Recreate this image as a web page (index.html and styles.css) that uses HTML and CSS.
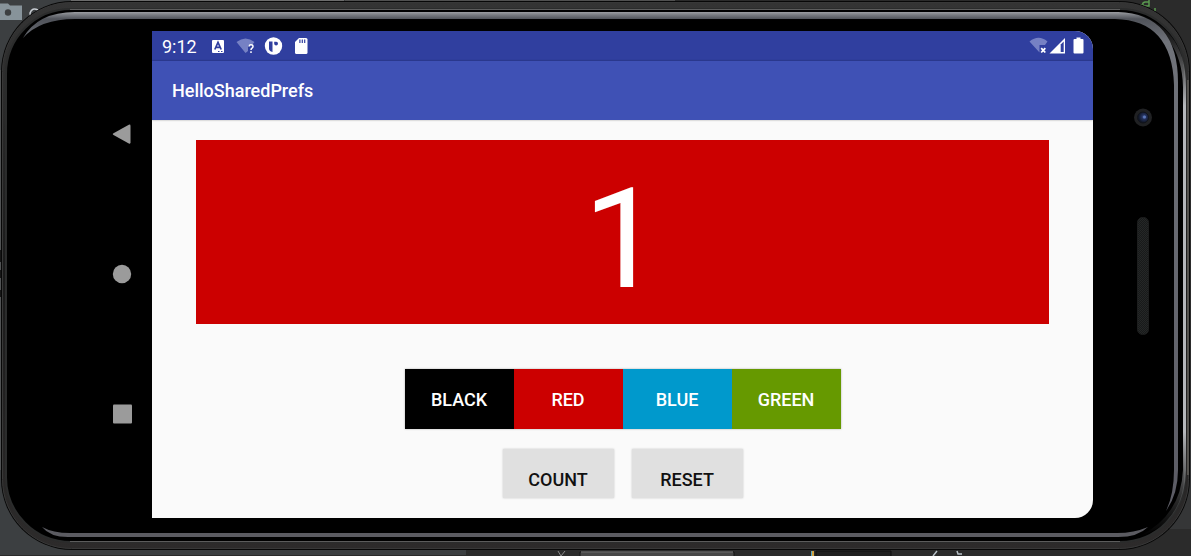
FILE: index.html
```html
<!DOCTYPE html>
<html lang="en">
<head>
<meta charset="utf-8">
<meta name="viewport" content="width=device-width, initial-scale=1">
<title>HelloSharedPrefs</title>
<link rel="stylesheet" href="styles.css">
</head>
<body>
<div class="stage">
  <svg class="frame" viewBox="0 0 1191 556" preserveAspectRatio="none" aria-hidden="true">
    <defs>
      <linearGradient id="rim" x1="0" x2="0" y1="0" y2="1">
        <stop offset="0" stop-color="#343434"/><stop offset=".5" stop-color="#1b1b1b"/><stop offset="1" stop-color="#2d2b2b"/>
      </linearGradient>
      <linearGradient id="shine" gradientUnits="userSpaceOnUse" x1="0" x2="0" y1="12" y2="511">
        <stop offset="0" stop-color="#9c9ea2"/><stop offset=".006" stop-color="#777a80"/><stop offset=".014" stop-color="#50535a"/><stop offset=".06" stop-color="#70737a"/><stop offset="1" stop-color="#5b5b64"/>
      </linearGradient>
      <linearGradient id="edge" x1="0" x2="0" y1="0" y2="1">
        <stop offset="0" stop-color="#555" stop-opacity="0"/><stop offset=".18" stop-color="#b5b7bb"/><stop offset=".8" stop-color="#b5b7bb"/><stop offset="1" stop-color="#555" stop-opacity="0"/>
      </linearGradient>
      <radialGradient id="lens" cx=".6" cy=".45"><stop offset="0" stop-color="#52669b"/><stop offset=".4" stop-color="#24315c"/><stop offset="1" stop-color="#101625"/></radialGradient>
      <pattern id="mesh" width="2" height="2" patternUnits="userSpaceOnUse"><path d="M0 0h2v2H0z" fill="#181a1a"/><path d="M0 0h1v1H0zM1 1h1v1H1z" fill="#252727"/></pattern>
    </defs>
    <path d="M0 0h345v4H0zM0 4h130v552H0z" fill="#3c3f41"/>
    <path d="M71 0h273v2H71z" fill="#6c6c6c"/>
    <path d="M345 0h330v2H345z" fill="#505050"/>
    <path d="M0 548h466v8H0z" fill="#3c3f41"/>
    <path d="M0 555h466v1H0z" fill="#2b2b2b"/>
    <path d="M1187 440h4v89h-51v-20z" fill="#353637"/>
    <path d="M0 3.500h8l2 2h12v14.500H0z" fill="#87939a"/><circle cx="8" cy="12.500" r="3.200" fill="#3c3f41"/>
    <path d="M38 10q-6-3-8 3 0 4 2 6" fill="none" stroke="#c7ccd1" stroke-width="1.500"/>
    <path d="M1136 5h6M1149 0v6h-5q-3-3 1-4h4M1155 8v3" fill="none" stroke="#5b9c50" stroke-width="1.500"/>
    <path d="M0 70h3v400H0z" fill="#515354"/>
    <path d="M0 250h1v12H0zM0 270h1v8H0zM0 290h1v7H0z" fill="#171717"/>
    <rect x="1" y="1" width="1189" height="549" rx="71" fill="#080808"/>
    <rect x="2.500" y="2.500" width="1186" height="546" rx="69" fill="url(#rim)" stroke="#383838"/>
    <rect x="6" y="9" width="1179" height="533" rx="65" fill="#000" stroke="#2b2c2c" stroke-width="2"/>
    <path d="M70 9.500H1120M70 541.500H1120" stroke="#5c5c5c" fill="none"/>
    <path d="M23 38Q38 12 75 12H1118Q1179 14 1178 85V470Q1178 494 1166 511 1174 494 1174 470V85Q1172 20 1115 19H75Q40 19 23 38Z" fill="url(#shine)"/>
    <path d="M42 527Q53 533 70 533H1117Q1134 533 1148 527 1138 537 1118 537H68Q50 537 42 527Z" fill="#5b5b61"/>
    <path d="M1126 11Q1186 23 1186 87V470Q1185 523 1138 537 1181 516 1183 470V87Q1182 30 1126 11Z" fill="url(#edge)"/>
    <path d="M1188 80V475" stroke="#55534f" stroke-width="2"/>
    <path d="M558 551l3 5 4-5" stroke="#8a8a8a" fill="none"/>
    <path d="M580 556v-4h154v4" fill="#484848" stroke="#141414"/>
    <path d="M581 552h152" stroke="#858585"/>
    <path d="M811 551h1v5h-1z" fill="#57a7c4"/><path d="M812 551h2v5h-2z" fill="#d3a240"/>
    <path d="M816 556v-5h75v5" fill="#202020" stroke="#111"/>
    <path d="M933 556l4-5M957 551l1 3h4" stroke="#b8c1c7" stroke-width="1.500" fill="none"/>
    <circle cx="1143" cy="117.500" r="9" fill="#202123"/><circle cx="1143" cy="117.500" r="5.500" fill="url(#lens)" stroke="#111319"/><circle cx="1144.500" cy="117" r="1.500" fill="#5b76b8"/>
    <rect x="1137.500" y="217.500" width="11" height="117" rx="5" fill="url(#mesh)" stroke="#1c1d1d"/>
  </svg>

  <div class="device">
    <nav class="system-nav" aria-label="System navigation">
      <button class="nav-key" aria-label="Back"><svg viewBox="0 0 20 20"><path d="M1.500 9.200 16.800.8Q18.500 0 18.500 2v16.200q0 2-1.700 1.200L1.500 11q-1.500-.9 0-1.800z"/></svg></button>
      <button class="nav-key" aria-label="Home"><svg viewBox="0 0 20 20"><circle cx="10" cy="10" r="9.200"/></svg></button>
      <button class="nav-key" aria-label="Recent apps"><svg viewBox="0 0 20 20"><rect x="1" y=".5" width="19" height="19" rx="1"/></svg></button>
    </nav>

    <div class="screen">
      <div class="status-bar">
        <div class="status-group">
          <span class="clock">9:12</span>
          <svg class="status-icon" viewBox="0 0 20 20"><rect x="4" y="4" width="12" height="13" rx="1" fill="#fff"/><path d="M6.800 13.500 10 6.300l3.200 7.200M8 11.300h4" fill="none" stroke="#303f9f" stroke-width="1.700"/><path d="M10 15h1.500v1H10zM13 15h1.500v1H13z" fill="#303f9f"/></svg>
          <svg class="status-icon" viewBox="0 0 20 20"><path d="M.500 6Q9.500-1 18.500 6L16 9h-4v6l-2.500 2z" fill="#7681c4"/><path d="M13 10.500Q13 8.700 15 8.700T17 10.400Q17 11.500 16 12.200T15 14M15 15.300V17" fill="none" stroke="#fff" stroke-width="1.500"/></svg>
          <svg class="status-icon" viewBox="0 0 20 20"><circle cx="9.500" cy="10" r="8.700" fill="#fff"/><path d="M5 5.500H8.500V16Q5 15 5 12.500z" fill="#303f9f"/><path d="M10.200 5.700h2.100a1.900 1.900 0 1 1-2.100 2z" fill="#303f9f"/></svg>
          <svg class="status-icon" viewBox="0 0 20 20"><path d="M7 2h7q1.500 0 1.500 1.500v13Q15.500 18 14 18H4.500Q3 18 3 16.500V6z" fill="#fff"/><path d="M7.300 3.500h1.200V7H7.300zM9.700 3.500h1.200V7H9.700zM12.100 3.500h1.200V7h-1.200z" fill="#303f9f"/></svg>
        </div>
        <div class="status-group status-right">
          <svg class="status-icon" viewBox="0 0 20 20"><path d="M.500 5.500Q9.500-2 18.500 5.500L16 9h-5.500v7.500z" fill="#7681c4"/><path d="M12.200 12.200l4.100 4.300M16.300 12.200l-4.100 4.300" stroke="#fff" stroke-width="1.800"/></svg>
          <svg class="status-icon" viewBox="0 0 20 20"><path d="M.500 17.500 16 2v15.500z" fill="#fff"/><path d="M11.700 8.500l3-3v10.500h-3z" fill="#303f9f"/></svg>
          <svg class="status-icon" viewBox="0 0 20 20"><path d="M7.500 1.500h4V3h2q1 0 1 1v12.500q0 1-1 1h-8q-1 0-1-1V4q0-1 1-1h2z" fill="#fff"/></svg>
        </div>
      </div>
      <header class="app-bar"><h1 class="app-title">HelloSharedPrefs</h1></header>
      <main class="content">
        <output class="count-display">1</output>
        <div class="color-row">
          <button class="color-button black">BLACK</button>
          <button class="color-button red">RED</button>
          <button class="color-button blue">BLUE</button>
          <button class="color-button green">GREEN</button>
        </div>
        <div class="action-row">
          <button class="action-button">COUNT</button>
          <button class="action-button">RESET</button>
        </div>
      </main>
    </div>
  </div>
</div>
</body>
</html>
```
FILE: styles.css
```css
* {
  box-sizing: border-box;
}

body {
  margin: 0;
  background: #2b2b2b;
  font-family: Roboto, "Noto Sans", sans-serif;
}

button {
  border: 0;
  font-family: inherit;
  cursor: pointer;
}

.stage {
  position: relative;
  display: flex;
  min-height: 100vh;
}

.frame {
  position: absolute;
  inset: 0;
  width: 100%;
  height: 100%;
}

.device {
  position: relative;
  display: flex;
  flex: 1;
  padding: 31px 98px 38px 92px;
}

.system-nav {
  display: flex;
  flex-direction: column;
  justify-content: center;
  align-items: center;
  gap: 120px;
  width: 60px;
  padding-bottom: 2px;
}

.nav-key {
  width: 20px;
  height: 20px;
  padding: 0;
  background: none;
}

.nav-key svg {
  display: block;
  fill: #9b9b9b;
}

.screen {
  display: flex;
  flex: 1;
  flex-direction: column;
  overflow: hidden;
  border-radius: 0 18px 18px 0;
  background: #fafafa;
}

.status-bar {
  display: flex;
  justify-content: space-between;
  align-items: center;
  height: 30px;
  padding: 0 4px 0 10px;
  background: #303f9f;
  color: #fff;
}

.status-group {
  display: flex;
  align-items: center;
  gap: 8px;
}

.status-right {
  gap: 0;
}

.clock {
  width: 38px;
  font-size: 18px;
}

.status-icon {
  width: 20px;
  height: 20px;
}

.app-bar {
  display: flex;
  align-items: center;
  height: 59px;
  padding: 0 20px;
  background: #3f51b5;
  box-shadow: 0 0 2px rgba(0, 0, 0, 0.35);
}

.app-title {
  margin: 0;
  color: #fff;
  font-size: 18px;
  font-weight: 500;
}

.content {
  display: flex;
  flex: 1;
  flex-direction: column;
  align-items: center;
  padding: 20px 44px;
}

.count-display {
  display: flex;
  flex: 1;
  justify-content: center;
  align-items: center;
  align-self: stretch;
  padding-top: 14px;
  background: #cc0000;
  color: #fff;
  font-size: 140px;
  line-height: 160px;
}

.color-row {
  display: flex;
  margin: 45px 0 20px;
  box-shadow: 0 0 2px rgba(0, 0, 0, 0.3);
}

.color-button {
  width: 109px;
  height: 60px;
  padding: 0;
  color: #fff;
  font-size: 18px;
  font-weight: 500;
}

.black {
  background: #000;
}

.red {
  background: #cc0000;
}

.blue {
  background: #0099cc;
}

.green {
  background: #669900;
}

.action-row {
  display: flex;
  gap: 18px;
}

.action-button {
  width: 111px;
  height: 49px;
  padding: 11px 0 0;
  background: #e0e0e0;
  box-shadow: 0 0 2px rgba(0, 0, 0, 0.2);
  color: #111;
  font-size: 18px;
  font-weight: 500;
}
```
